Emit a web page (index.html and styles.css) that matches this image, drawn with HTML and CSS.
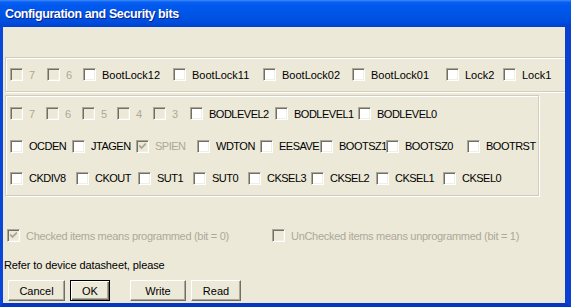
FILE: index.html
```html
<!DOCTYPE html>
<html lang="en">
  <head>
    <meta charset="utf-8" />
    <title>Configuration and Security bits</title>
    <link rel="stylesheet" href="styles.css">
  </head>
  <body>
    <div class="dialog">
      <div class="dialog__title">Configuration and Security bits</div>
      <div class="dialog__client">

        <div class="group group--lock">
          <div class="bits bits--lock">
            <label class="bit disabled"><span class="box"></span><span class="txt">7</span></label>
            <label class="bit disabled"><span class="box"></span><span class="txt">6</span></label>
            <label class="bit"><span class="box"></span><span class="txt">BootLock12</span></label>
            <label class="bit"><span class="box"></span><span class="txt">BootLock11</span></label>
            <label class="bit"><span class="box"></span><span class="txt">BootLock02</span></label>
            <label class="bit"><span class="box"></span><span class="txt">BootLock01</span></label>
            <label class="bit"><span class="box"></span><span class="txt">Lock2</span></label>
            <label class="bit"><span class="box"></span><span class="txt">Lock1</span></label>
          </div>
        </div>

        <div class="group group--fuse">
          <div class="bits bits--ext">
            <label class="bit disabled"><span class="box"></span><span class="txt">7</span></label>
            <label class="bit disabled"><span class="box"></span><span class="txt">6</span></label>
            <label class="bit disabled"><span class="box"></span><span class="txt">5</span></label>
            <label class="bit disabled"><span class="box"></span><span class="txt">4</span></label>
            <label class="bit disabled"><span class="box"></span><span class="txt">3</span></label>
            <label class="bit"><span class="box"></span><span class="txt">BODLEVEL2</span></label>
            <label class="bit"><span class="box"></span><span class="txt">BODLEVEL1</span></label>
            <label class="bit"><span class="box"></span><span class="txt">BODLEVEL0</span></label>
          </div>
          <div class="bits bits--high">
            <label class="bit"><span class="box"></span><span class="txt">OCDEN</span></label>
            <label class="bit"><span class="box"></span><span class="txt">JTAGEN</span></label>
            <label class="bit disabled"><span class="box checked"><svg viewBox="0 0 7 7" width="7" height="7"><path d="M0 2.5 L2.5 5 L7 0.5" /></svg></span><span class="txt">SPIEN</span></label>
            <label class="bit"><span class="box"></span><span class="txt">WDTON</span></label>
            <label class="bit"><span class="box"></span><span class="txt">EESAVE</span></label>
            <label class="bit"><span class="box"></span><span class="txt">BOOTSZ1</span></label>
            <label class="bit"><span class="box"></span><span class="txt">BOOTSZ0</span></label>
            <label class="bit"><span class="box"></span><span class="txt">BOOTRST</span></label>
          </div>
          <div class="bits bits--low">
            <label class="bit"><span class="box"></span><span class="txt">CKDIV8</span></label>
            <label class="bit"><span class="box"></span><span class="txt">CKOUT</span></label>
            <label class="bit"><span class="box"></span><span class="txt">SUT1</span></label>
            <label class="bit"><span class="box"></span><span class="txt">SUT0</span></label>
            <label class="bit"><span class="box"></span><span class="txt">CKSEL3</span></label>
            <label class="bit"><span class="box"></span><span class="txt">CKSEL2</span></label>
            <label class="bit"><span class="box"></span><span class="txt">CKSEL1</span></label>
            <label class="bit"><span class="box"></span><span class="txt">CKSEL0</span></label>
          </div>
        </div>

        <div class="legend">
          <label class="bit disabled"><span class="box checked"><svg viewBox="0 0 7 7" width="7" height="7"><path d="M0 2.5 L2.5 5 L7 0.5" /></svg></span><span class="txt">Checked items means programmed (bit = 0)</span></label>
          <label class="bit disabled"><span class="box"></span><span class="txt">UnChecked items means unprogrammed (bit = 1)</span></label>
        </div>

        <div class="note">Refer to device datasheet, please</div>

        <div class="buttons">
          <button class="btn btn--cancel">Cancel</button>
          <button class="btn btn--ok">OK</button>
          <button class="btn btn--write">Write</button>
          <button class="btn btn--read">Read</button>
        </div>
      </div>
    </div>
  </body>
</html>
```

FILE: styles.css
```css
html, body {
	margin: 0;
	padding: 0;
}

body {
	width: 571px;
	height: 307px;
	overflow: hidden;
	font-family: "Liberation Sans", Arial, sans-serif;
	font-size: 11px;
	color: #000;
}

.dialog {
	width: 571px;
	height: 307px;
	box-sizing: border-box;
	display: flex;
	flex-direction: column;
	background: #0842d6;
	border-left: 3px solid #0a46d9;
	border-right: 6px solid #0a3fd0;
	border-bottom: 4px solid #0637c4;
}

.dialog__title {
	height: 27px;
	margin: 0 -6px 0 -3px;
	padding-left: 5px;
	display: flex;
	align-items: center;
	color: #fff;
	font-weight: bold;
	font-size: 12.5px;
	letter-spacing: -0.4px;
	text-shadow: 1px 1px 0 #0a1e8c;
	background: linear-gradient(to bottom, #3d8cff 0, #0a60f0 2px, #0058ee 6px, #0055e5 14px, #004ddd 22px, #0040cf 27px);
}

.dialog__client {
	flex: 1;
	background: #ece9d8;
	overflow: hidden;
	padding-top: 30px;
}

/* group boxes, etched */
.group {
	margin-left: 2px;
	border: 1px solid #d0cdbe;
	box-shadow: inset 1px 1px 0 #fff, 1px 1px 0 #fff;
}

.group--lock {
	width: 580px;
	height: 33px;
	display: flex;
	align-items: center;
}

.group--fuse {
	width: 534px;
	height: 101px;
	margin-top: 3px;
	padding-top: 1px;
	box-sizing: border-box;
}

.bits {
	display: grid;
	align-items: center;
	padding-left: 4px;
}

.bits--lock {
	grid-template-columns: 37px 36px 90px 90px 89px 94px 57px 60px;
}
.bits--ext {
	height: 33px;
	grid-template-columns: 36px 36px 35px 36px 37px 85px 83px 90px;
}
.bits--high {
	height: 32px;
	grid-template-columns: 62px 64px 61px 63px 60px 66px 81px 70px;
}
.bits--low {
	height: 32px;
	grid-template-columns: 66px 62px 55px 55px 63px 65px 67px 80px;
}

.bits--ext .txt,
.bits--high .txt,
.bits--low .txt {
	letter-spacing: -0.5px;
}

.bit {
	display: flex;
	align-items: center;
	gap: 6px;
	white-space: nowrap;
	overflow: hidden;
}

.bit.disabled .txt {
	color: #aca899;
}

.box {
	flex: none;
	width: 13px;
	height: 13px;
	box-sizing: border-box;
	display: flex;
	align-items: center;
	justify-content: center;
	background: #fff;
	border: 1px solid;
	border-color: #aca899 #fff #fff #aca899;
	box-shadow: inset 1px 1px 0 #716f64, inset -1px -1px 0 #f1efe2;
}

.disabled .box {
	background: #ece9d8;
}

.box svg path {
	fill: none;
	stroke: #aca899;
	stroke-width: 1.8;
}

.legend {
	margin-top: 33px;
	padding-left: 4px;
	height: 13px;
	display: grid;
	grid-template-columns: 265px auto;
	letter-spacing: -0.3px;
}

.note {
	margin-top: 17px;
	padding-left: 1px;
	height: 13px;
	line-height: 13px;
	letter-spacing: -0.1px;
}

.buttons {
	margin-top: 8px;
	padding-left: 5px;
	display: flex;
}

.btn {
	height: 21px;
	padding: 0;
	font: inherit;
	color: #000;
	background: #ece9d8;
	border: 1px solid;
	border-color: #fff #716f64 #716f64 #fff;
	box-shadow: inset -1px -1px 0 #aca899;
}

.btn--cancel { width: 57px; }
.btn--ok {
	width: 40px;
	margin-left: 5px;
	border: 1px solid #000;
	box-shadow: inset 1px 1px 0 #fff, inset -1px -1px 0 #716f64, inset -2px -2px 0 #aca899;
}
.btn--write { width: 56px; margin-left: 20px; }
.btn--read { width: 50px; margin-left: 5px; }
```
